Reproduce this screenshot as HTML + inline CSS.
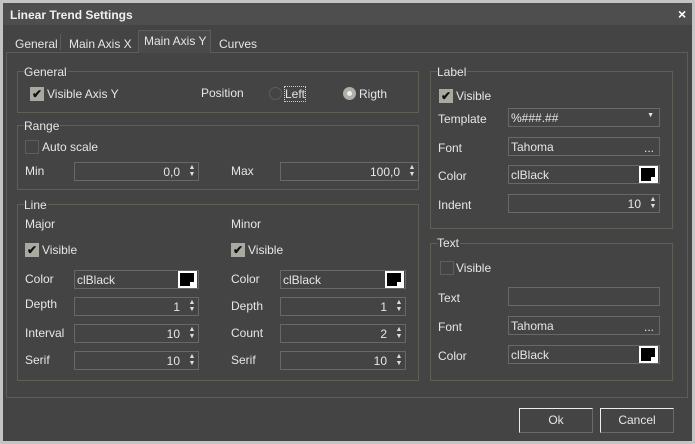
<!DOCTYPE html>
<html><head><meta charset="utf-8"><style>
*{box-sizing:border-box;margin:0;padding:0}
body{width:695px;height:444px;background:#c4c4c4;font-family:"Liberation Sans",sans-serif;font-size:12px;color:#e6e6e6;position:relative;overflow:hidden}
.a{position:absolute}
.t{position:absolute;line-height:14px;white-space:nowrap}
.win{position:absolute;left:3px;top:3px;width:689px;height:438px;background:#444}
.title{position:absolute;left:3px;top:3px;width:689px;height:22px;background:#4e4e4e}
.grp{position:absolute;border:1px solid #5f5f55}
.gt{position:absolute;background:#444;line-height:13px;padding-right:1px}
.f{position:absolute;border:1px solid #686868;background:#444;height:19px}
.cb{position:absolute;width:14px;height:14px;border:1px solid #5e5e5e}
.cb.on{background:#a9a9a0;border-color:#a9a9a0;color:#111;font-size:12px;line-height:12px;text-align:center;font-weight:bold}
.sp{position:absolute;right:2px;top:1px;font-size:7px;line-height:7px;color:#ddd;width:8px;text-align:center}
.num{position:absolute;right:18px;top:2px;line-height:14px}
.sw{position:absolute;right:1px;top:0px;width:19px;height:17px;background:#fff;border:1px solid #fff}
.sw i{position:absolute;left:1px;top:1px;width:14px;height:13px;background:#000}
.sw b{position:absolute;right:0;bottom:0;width:6px;height:5px;background:#fff;font-size:6px}
.ft{position:absolute;left:2px;top:2px;line-height:14px}
.btn{position:absolute;height:25px;border:1px solid #6a6a6a;border-left-color:#eee;border-top-color:#eee;text-align:center;line-height:23px;font-size:12px}
</style></head><body>
<div class="win"></div>
<div class="title"></div>
<div class="t" style="left:10px;top:8px;font-weight:bold;color:#f0f0f0">Linear Trend Settings</div>
<div class="t" style="left:678px;top:7px;font-weight:bold;font-size:14px;color:#fff">×</div>

<div class="a" style="left:6px;top:52px;width:682px;height:346px;border:1px solid #5c5c5c"></div>
<div class="a" style="left:138px;top:30px;width:73px;height:23px;background:#4a4a4a;border:1px solid #5c5c5c;border-bottom:none"></div>
<div class="a" style="left:60px;top:34px;width:1px;height:16px;background:#5c5c5c"></div>
<div class="t" style="left:15px;top:37px">General</div>
<div class="t" style="left:69px;top:37px">Main Axis X</div>
<div class="t" style="left:144px;top:34px">Main Axis Y</div>
<div class="t" style="left:219px;top:37px">Curves</div>

<div class="grp" style="left:17px;top:71px;width:402px;height:42px"></div>
<div class="gt" style="left:24px;top:66px">General</div>
<div class="cb on" style="left:30px;top:87px">✔</div>
<div class="t" style="left:47px;top:87px">Visible Axis Y</div>
<div class="t" style="left:201px;top:86px">Position</div>
<div class="a" style="left:269px;top:87px;width:13px;height:13px;border-radius:50%;border:1px solid #5e5e5e"></div>
<div class="t" style="left:285px;top:87px;outline:1px dotted #ccc">Left</div>
<div class="a" style="left:343px;top:87px;width:13px;height:13px;border-radius:50%;background:#b0b0a8"></div>
<div class="a" style="left:347px;top:91px;width:5px;height:5px;border-radius:50%;background:#eee"></div>
<div class="t" style="left:359px;top:87px">Rigth</div>

<div class="grp" style="left:17px;top:125px;width:402px;height:65px"></div>
<div class="gt" style="left:24px;top:120px">Range</div>
<div class="cb" style="left:25px;top:140px"></div>
<div class="t" style="left:42px;top:140px">Auto scale</div>
<div class="t" style="left:25px;top:164px">Min</div>
<div class="f" style="left:74px;top:162px;width:125px"><span class="num">0,0</span><span class="sp">▲<br>▼</span></div>
<div class="t" style="left:231px;top:164px">Max</div>
<div class="f" style="left:280px;top:162px;width:139px"><span class="num">100,0</span><span class="sp">▲<br>▼</span></div>

<div class="grp" style="left:17px;top:204px;width:402px;height:177px"></div>
<div class="gt" style="left:24px;top:199px">Line</div>
<div class="t" style="left:25px;top:217px">Major</div>
<div class="t" style="left:231px;top:217px">Minor</div>
<div class="cb on" style="left:25px;top:243px">✔</div>
<div class="t" style="left:42px;top:243px">Visible</div>
<div class="cb on" style="left:231px;top:243px">✔</div>
<div class="t" style="left:248px;top:243px">Visible</div>

<div class="t" style="left:25px;top:272px">Color</div>
<div class="f" style="left:74px;top:270px;width:125px"><span class="ft">clBlack</span><span class="sw"><i></i><b></b></span></div>
<div class="t" style="left:25px;top:297px">Depth</div>
<div class="f" style="left:74px;top:297px;width:125px"><span class="num">1</span><span class="sp">▲<br>▼</span></div>
<div class="t" style="left:25px;top:326px">Interval</div>
<div class="f" style="left:74px;top:324px;width:125px"><span class="num">10</span><span class="sp">▲<br>▼</span></div>
<div class="t" style="left:25px;top:353px">Serif</div>
<div class="f" style="left:74px;top:351px;width:125px"><span class="num">10</span><span class="sp">▲<br>▼</span></div>

<div class="t" style="left:231px;top:272px">Color</div>
<div class="f" style="left:280px;top:270px;width:126px"><span class="ft">clBlack</span><span class="sw"><i></i><b></b></span></div>
<div class="t" style="left:231px;top:299px">Depth</div>
<div class="f" style="left:280px;top:297px;width:126px"><span class="num">1</span><span class="sp">▲<br>▼</span></div>
<div class="t" style="left:231px;top:326px">Count</div>
<div class="f" style="left:280px;top:324px;width:126px"><span class="num">2</span><span class="sp">▲<br>▼</span></div>
<div class="t" style="left:231px;top:353px">Serif</div>
<div class="f" style="left:280px;top:351px;width:126px"><span class="num">10</span><span class="sp">▲<br>▼</span></div>

<div class="grp" style="left:430px;top:71px;width:243px;height:158px"></div>
<div class="gt" style="left:437px;top:66px">Label</div>
<div class="cb on" style="left:439px;top:89px">✔</div>
<div class="t" style="left:456px;top:89px">Visible</div>
<div class="t" style="left:438px;top:112px">Template</div>
<div class="f" style="left:508px;top:108px;width:152px"><span class="ft">%###.##</span><span class="a" style="right:5px;top:3px;font-size:7px">▼</span></div>
<div class="t" style="left:438px;top:141px">Font</div>
<div class="f" style="left:508px;top:137px;width:152px"><span class="ft">Tahoma</span><span class="a" style="right:5px;top:3px">...</span></div>
<div class="t" style="left:438px;top:169px">Color</div>
<div class="f" style="left:508px;top:165px;width:152px"><span class="ft">clBlack</span><span class="sw"><i></i><b></b></span></div>
<div class="t" style="left:438px;top:198px">Indent</div>
<div class="f" style="left:508px;top:194px;width:152px"><span class="num">10</span><span class="sp">▲<br>▼</span></div>

<div class="grp" style="left:430px;top:243px;width:243px;height:138px"></div>
<div class="gt" style="left:437px;top:237px">Text</div>
<div class="cb" style="left:440px;top:261px"></div>
<div class="t" style="left:456px;top:261px">Visible</div>
<div class="t" style="left:438px;top:291px">Text</div>
<div class="f" style="left:508px;top:287px;width:152px"></div>
<div class="t" style="left:438px;top:320px">Font</div>
<div class="f" style="left:508px;top:316px;width:152px"><span class="ft">Tahoma</span><span class="a" style="right:5px;top:3px">...</span></div>
<div class="t" style="left:438px;top:349px">Color</div>
<div class="f" style="left:508px;top:345px;width:152px"><span class="ft">clBlack</span><span class="sw"><i></i><b></b></span></div>

<div class="btn" style="left:519px;top:408px;width:74px">Ok</div>
<div class="btn" style="left:600px;top:408px;width:74px">Cancel</div>
</body></html>
